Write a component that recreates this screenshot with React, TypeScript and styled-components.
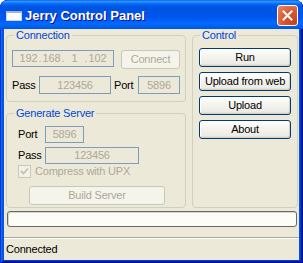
import React from "react";
import styled, { createGlobalStyle } from "styled-components";

const Global = createGlobalStyle`
  html, body { margin: 0; padding: 0; background: #ffffff; }
  body {
    font-family: "Liberation Sans", Arial, sans-serif;
    font-size: 11px;
    letter-spacing: -0.2px;
  }
  * { box-sizing: border-box; }
`;

const Window = styled.div`
  width: 303px;
  height: 263px;
  display: flex;
  flex-direction: column;
  background: #0055e5;
  border-radius: 8px 8px 0 0;
  overflow: hidden;
  box-shadow: inset 1px 1px #0831d9, inset -1px -1px #00138c,
    inset 2px 2px #166aee, inset -2px -2px #001ea0, inset 3px 3px #0855dd,
    inset -3px -3px #003bda;
`;

const TitleBar = styled.div`
  height: 29px;
  flex: none;
  display: flex;
  align-items: center;
  padding: 0 5px 0 6px;
  border-radius: 8px 8px 0 0;
  background: linear-gradient(
    180deg,
    #0058ee 0%,
    #3593ff 4%,
    #288eff 7%,
    #127dff 10%,
    #036ffc 13%,
    #0262ee 17%,
    #0057e5 22%,
    #0054e3 28%,
    #0055eb 56%,
    #005bf5 68%,
    #026afe 80%,
    #0062ef 90%,
    #0055e5 100%
  );
`;

const TitleIcon = styled.div`
  width: 16px;
  height: 10px;
  margin-top: 2px;
  margin-right: 3px;
  background: #ffffff;
  border: 1px solid #c8d4e8;
  border-top: 2px solid #9fb2cf;
`;

const TitleText = styled.div`
  color: #ffffff;
  font-weight: bold;
  font-size: 13px;
  letter-spacing: 0;
  margin-top: 1px;
  text-shadow: 1px 1px #0f1089;
`;

const CloseButton = styled.div`
  margin-left: auto;
  margin-top: 2px;
  width: 21px;
  height: 21px;
  border: 1px solid #ffffff;
  border-radius: 3px;
  background: radial-gradient(
    circle at 85% 85%,
    #c8401a 0%,
    #d9582c 45%,
    #e2704c 75%,
    #eb8a6c 100%
  );
  display: flex;
  align-items: center;
  justify-content: center;
`;

const Client = styled.div`
  flex: 1;
  margin: 0 4px 3px;
  background: #ece9d8;
  display: flex;
  flex-direction: column;
`;

const Content = styled.div`
  padding: 0 1px 0 2px;
  display: flex;
  flex-direction: column;
`;

const MainRow = styled.div`
  height: 179px;
  display: flex;
  gap: 6px;
`;

const Column = styled.div<{ $w: number }>`
  width: ${(p) => p.$w}px;
  display: flex;
  flex-direction: column;
  gap: 5px;
`;

const Group = styled.fieldset<{ $grow?: boolean }>`
  margin: 0;
  padding: 0;
  min-width: 0;
  border: 1px solid #d0d0bf;
  border-radius: 4px;
  ${(p) => (p.$grow ? "flex: 1;" : "")}
`;

const Legend = styled.legend`
  margin-left: 7px;
  padding: 0 2px;
  color: #0046d5;
  line-height: 13px;
  font-size: 11px;
`;

const GroupBody = styled.div<{ $pad: string }>`
  padding: ${(p) => p.$pad};
  display: flex;
  flex-direction: column;
`;

const Row = styled.div<{ $mt?: number }>`
  display: flex;
  align-items: center;
  margin-top: ${(p) => p.$mt ?? 0}px;
`;

const TopRow = styled.div`
  display: flex;
  align-items: flex-start;
`;

const Label = styled.span<{ $w: number }>`
  width: ${(p) => p.$w}px;
  color: #000000;
  line-height: 13px;
`;

const Field = styled.div<{ $w: number; $h?: number }>`
  width: ${(p) => p.$w}px;
  height: ${(p) => p.$h ?? 17}px;
  border: 1px solid #7f9db9;
  background: #ece9d8;
  color: #aca899;
  display: flex;
  align-items: center;
  justify-content: center;
  line-height: 13px;
`;

const IpSegment = styled.span`
  width: 20px;
  text-align: center;
`;

const IpDot = styled.span`
  width: 3px;
  text-align: center;
`;

const Button = styled.button<{ $w: number; $ml?: number }>`
  width: ${(p) => p.$w}px;
  height: 19px;
  margin: 0 0 0 ${(p) => p.$ml ?? 0}px;
  padding: 0;
  font: inherit;
  letter-spacing: -0.2px;
  color: #000000;
  border: 1px solid #003c74;
  border-radius: 3px;
  background: linear-gradient(180deg, #ffffff 0%, #f4f3ee 45%, #ecebe6 86%, #d6d0c5 100%);
  box-shadow: inset -1px -1px #d6d0c5, inset 1px 1px #ffffff;
  line-height: 15px;

  &:disabled {
    border-color: #c9c7ba;
    background: #f5f4ea;
    color: #aca899;
    box-shadow: none;
  }
`;

const ButtonStack = styled.div`
  display: flex;
  flex-direction: column;
  gap: 5px;
`;

const CheckRow = styled.div`
  height: 15px;
  display: flex;
  align-items: center;
  gap: 4px;
  color: #aca899;
  line-height: 13px;
`;

const CheckBox = styled.div`
  width: 13px;
  height: 13px;
  border: 1px solid #cac8bb;
  background: #f2f1e6;
  display: flex;
  align-items: center;
  justify-content: center;
`;

const Progress = styled.div`
  margin: 3px 0 0 1px;
  width: 290px;
  height: 16px;
  border: 1px solid #686868;
  border-radius: 3px;
  background: #fdfdf8;
  box-shadow: inset 1px 1px #d8d6cc;
`;

const StatusBar = styled.div`
  margin-top: auto;
  height: 23px;
  border-top: 1px solid #aca899;
  box-shadow: inset 0 1px #ffffff;
  display: flex;
  align-items: center;
  padding: 1px 2px 0 2px;
  color: #000000;
  line-height: 13px;
`;

export default function App() {
  return (
    <>
      <Global />
      <Window>
        <TitleBar>
          <TitleIcon />
          <TitleText>Jerry Control Panel</TitleText>
          <CloseButton>
            <svg width="11" height="11" viewBox="0 0 11 11">
              <path
                d="M1.5 1.5 L9.5 9.5 M9.5 1.5 L1.5 9.5"
                stroke="#ffffff"
                strokeWidth="2"
                strokeLinecap="square"
              />
            </svg>
          </CloseButton>
        </TitleBar>
        <Client>
          <Content>
            <MainRow>
              <Column $w={180}>
                <Group>
                  <Legend>Connection</Legend>
                  <GroupBody $pad="8px 0 7px 5px">
                    <TopRow>
                      <Field $w={102}>
                        <IpSegment>192</IpSegment>
                        <IpDot>.</IpDot>
                        <IpSegment>168</IpSegment>
                        <IpDot>.</IpDot>
                        <IpSegment>1</IpSegment>
                        <IpDot>.</IpDot>
                        <IpSegment>102</IpSegment>
                      </Field>
                      <Button $w={59} $ml={7} disabled>
                        Connect
                      </Button>
                    </TopRow>
                    <Row $mt={7}>
                      <Label $w={27}>Pass</Label>
                      <Field $w={72} $h={18}>
                        123456
                      </Field>
                      <Label $w={24} style={{ marginLeft: 3 }}>
                        Port
                      </Label>
                      <Field $w={42} $h={18}>
                        5896
                      </Field>
                    </Row>
                  </GroupBody>
                </Group>
                <Group $grow>
                  <Legend>Generate Server</Legend>
                  <GroupBody $pad="6px 0 2px 11px">
                    <Row>
                      <Label $w={27}>Port</Label>
                      <Field $w={39}>5896</Field>
                    </Row>
                    <Row $mt={4}>
                      <Label $w={27}>Pass</Label>
                      <Field $w={94}>123456</Field>
                    </Row>
                    <CheckRow>
                      <CheckBox>
                        <svg width="9" height="9" viewBox="0 0 9 9">
                          <path
                            d="M1 4 L3.5 6.5 L8 1.5"
                            stroke="#c4c2b4"
                            strokeWidth="1.8"
                            fill="none"
                          />
                        </svg>
                      </CheckBox>
                      Compress with UPX
                    </CheckRow>
                    <Row $mt={7}>
                      <Button $w={136} $ml={11} disabled>
                        Build Server
                      </Button>
                    </Row>
                  </GroupBody>
                </Group>
              </Column>
              <Column $w={106}>
                <Group $grow>
                  <Legend>Control</Legend>
                  <GroupBody $pad="6px 6px 0 6px">
                    <ButtonStack>
                      <Button $w={92}>Run</Button>
                      <Button $w={92}>Upload from web</Button>
                      <Button $w={92}>Upload</Button>
                      <Button $w={92}>About</Button>
                    </ButtonStack>
                  </GroupBody>
                </Group>
              </Column>
            </MainRow>
            <Progress />
          </Content>
          <StatusBar>Connected</StatusBar>
        </Client>
      </Window>
    </>
  );
}
